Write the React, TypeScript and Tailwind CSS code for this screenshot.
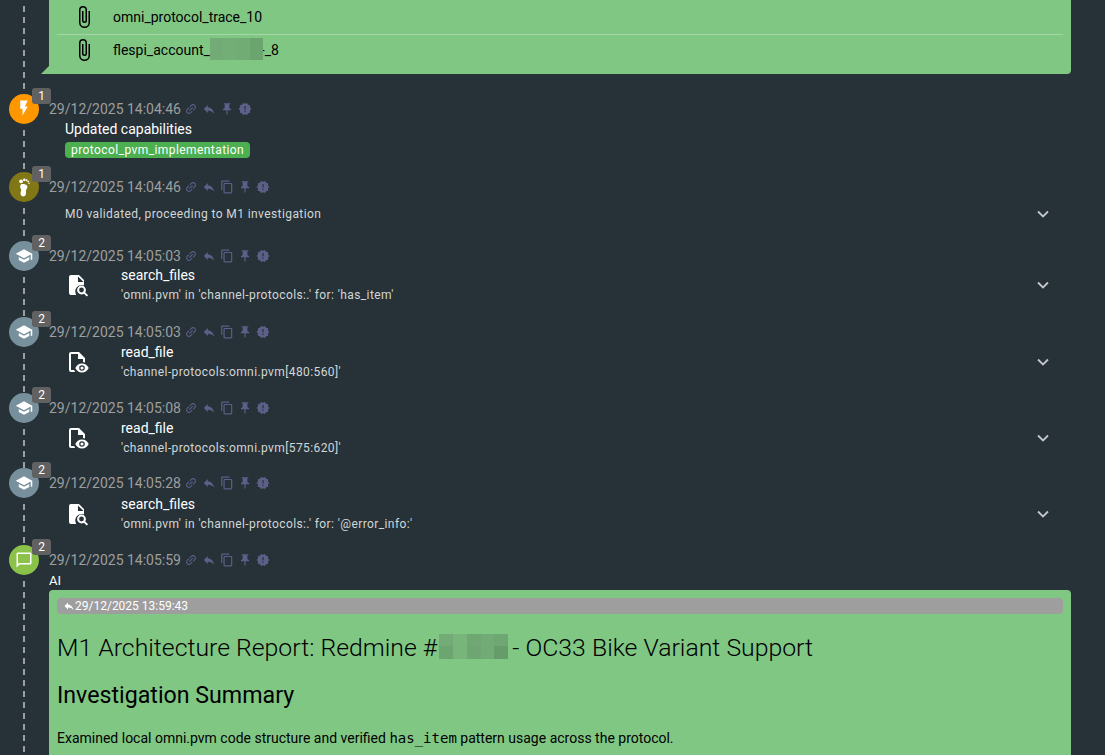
import type { ReactNode } from "react";

const P = {
  link: "M3.9 12c0-1.71 1.39-3.1 3.1-3.1h4V7H7c-2.76 0-5 2.24-5 5s2.24 5 5 5h4v-1.9H7c-1.71 0-3.1-1.39-3.1-3.1zM8 13h8v-2H8v2zm9-6h-4v1.9h4c1.71 0 3.1 1.39 3.1 3.1s-1.39 3.1-3.1 3.1h-4V17h4c2.76 0 5-2.24 5-5s-2.24-5-5-5z",
  reply: "M10 9V5l-7 7 7 7v-4.1c5 0 8.5 1.6 11 5.1-1-5-4-10-11-11z",
  copy: "M16 1H4c-1.1 0-2 .9-2 2v14h2V3h12V1zm3 4H8c-1.1 0-2 .9-2 2v14c0 1.1.9 2 2 2h11c1.1 0 2-.9 2-2V7c0-1.1-.9-2-2-2zm0 16H8V7h11v14z",
  pin: "M16 9V4h1c.55 0 1-.45 1-1s-.45-1-1-1H7c-.55 0-1 .45-1 1s.45 1 1 1h1v5c0 1.66-1.34 3-3 3v2h5.97v7l1 1 1-1v-7H19v-2c-1.66 0-3-1.34-3-3z",
  alert: "M23 12l-2.44-2.78.34-3.68-3.61-.82-1.89-3.18L12 3 8.6 1.54 6.71 4.72l-3.61.81.34 3.68L1 12l2.44 2.78-.34 3.69 3.61.82 1.89 3.18L12 21l3.4 1.46 1.89-3.18 3.61-.82-.34-3.68L23 12zm-10 5h-2v-2h2v2zm0-4h-2V7h2v6z",
  clip: "M16.5,6V17.5A4,4 0 0,1 12.5,21.5A4,4 0 0,1 8.5,17.5V5A2.5,2.5 0 0,1 11,2.5A2.5,2.5 0 0,1 13.5,5V15.5A1,1 0 0,1 12.5,16.5A1,1 0 0,1 11.5,15.5V6H10V15.5A2.5,2.5 0 0,0 12.5,18A2.5,2.5 0 0,0 15,15.5V5A4,4 0 0,0 11,1A4,4 0 0,0 7,5V17.5A5.5,5.5 0 0,0 12.5,23A5.5,5.5 0 0,0 18,17.5V6H16.5Z",
  bolt: "M7 2v11h3v9l7-12h-4l4-8z",
  school: "M5 13.18v4L12 21l7-3.82v-4L12 17l-7-3.82zM12 3 1 9l11 6 9-4.91V17h2V9L12 3z",
  chat: "M20 2H4c-1.1 0-2 .9-2 2v18l4-4h14c1.1 0 2-.9 2-2V4c0-1.1-.9-2-2-2zm0 14H5.17L4 17.17V4h16v12z",
};

function Icon({ d, className }: { d: string; className: string }) {
  return (
    <svg viewBox="0 0 24 24" className={className} fill="currentColor">
      <path d={d} />
    </svg>
  );
}

function Foot({ className }: { className: string }) {
  return (
    <svg viewBox="0 0 24 24" className={className} fill="currentColor">
      <path d="M9.500 8.800c2.800-.6 6 .2 6.200 2.700.2 2-1.400 3.200-1.600 4.800-.1 1 .2 2 .1 3.100-.2 1.700-1.500 3-3.200 2.900-1.800-.1-2.900-1.600-2.800-3.400.1-1.600.9-2.600.7-4.100-.2-1.200-1.200-2-1.100-3.200.1-1.400.6-2.500 1.700-2.800z" />
      <circle cx="8.800" cy="5.800" r="2.100" />
      <circle cx="12.300" cy="4.200" r="1.400" />
      <circle cx="14.800" cy="4.600" r="1.100" />
      <circle cx="16.600" cy="6" r=".95" />
      <circle cx="17.500" cy="7.900" r=".85" />
    </svg>
  );
}

function FileSearch({ className }: { className: string }) {
  return (
    <svg viewBox="0 0 24 24" className={className} fill="currentColor">
      <path d="M14 2H6a2 2 0 0 0-2 2v16a2 2 0 0 0 2 2h5.2a7 7 0 0 1-.9-3.5c0-3.6 2.9-6.5 6.5-6.5.8 0 1.5.1 2.2.4V7zm-1 1.5L18.500 9H13z" fillRule="evenodd" />
      <path d="M16.500 12.600a4.400 4.400 0 0 0-4.400 4.400 4.400 4.400 0 0 0 4.400 4.400c.9 0 1.700-.3 2.400-.7l2.900 2.900 1.300-1.300-2.900-2.900c.4-.7.700-1.500.700-2.400a4.400 4.400 0 0 0-4.400-4.400zm0 2a2.400 2.400 0 1 1 0 4.800 2.400 2.400 0 0 1 0-4.800z" />
    </svg>
  );
}

function FileEye({ className }: { className: string }) {
  return (
    <svg viewBox="0 0 24 24" className={className} fill="currentColor">
      <path d="M14 2H6a2 2 0 0 0-2 2v16a2 2 0 0 0 2 2h4.200a9 9 0 0 1-1.100-2H6V4h7v5h5v3.100c.7.100 1.400.300 2 .5V8z" />
      <path d="M17 13.500c-3 0-5.600 1.900-6.700 4.500 1.100 2.600 3.700 4.500 6.700 4.500s5.600-1.900 6.700-4.500c-1.100-2.600-3.700-4.500-6.700-4.500zm0 7.300a2.800 2.800 0 1 1 0-5.600 2.800 2.800 0 0 1 0 5.600zm0-4.400a1.600 1.600 0 1 0 0 3.200 1.600 1.600 0 0 0 0-3.200z" fillRule="evenodd" />
    </svg>
  );
}

function Chevron() {
  return (
    <svg viewBox="0 0 24 24" className="h-5 w-5 shrink-0 text-[#c4c8ca]" fill="none" stroke="currentColor" strokeWidth="2.200">
      <path d="M6 9l6 6 6-6" />
    </svg>
  );
}

function Dashes() {
  return (
    <div className="mt-[6px] min-h-0 w-0.5 flex-1 bg-[repeating-linear-gradient(to_bottom,#9e9e9e_0,#9e9e9e_6px,transparent_6px,transparent_11px)]" />
  );
}

function Meta({ time, copy = true }: { time: string; copy?: boolean }) {
  const ic = "h-3.5 w-3.5 shrink-0";
  return (
    <div className="flex h-[30px] items-center">
      <span className="w-[135px] shrink-0 whitespace-nowrap text-sm text-[#9e9e9e]">{time}</span>
      <div className="flex items-center gap-1 text-[#5c5f87]">
        <Icon d={P.link} className={`${ic} -rotate-45`} />
        <Icon d={P.reply} className={ic} />
        {copy && <Icon d={P.copy} className={ic} />}
        <Icon d={P.pin} className={ic} />
        <Icon d={P.alert} className={ic} />
      </div>
    </div>
  );
}

function Row({
  color,
  count,
  avatar,
  height,
  children,
}: {
  color: string;
  count: number;
  avatar: ReactNode;
  height: string;
  children: ReactNode;
}) {
  return (
    <div className={`flex ${height}`}>
      <div className="ml-[9px] mr-2.5 flex w-[30px] shrink-0 flex-col items-center">
        <div className={`relative flex h-[30px] w-[30px] shrink-0 items-center justify-center rounded-full text-white ${color}`}>
          {avatar}
          <span className="absolute left-[23px] top-[-6px] flex h-4 w-[19px] items-center justify-center rounded-[3px] bg-[#616161] text-xs text-white">
            {count}
          </span>
        </div>
        <Dashes />
      </div>
      <div className="min-w-0 flex-1 pr-[34px]">{children}</div>
    </div>
  );
}

function ToolRow({
  time,
  name,
  detail,
  height,
  shift,
  eye,
}: {
  time: string;
  name: string;
  detail: string;
  height: string;
  shift: string;
  eye?: boolean;
}) {
  return (
    <Row color="bg-[#78909c]" count={2} avatar={<Icon d={P.school} className="h-[18px] w-[18px]" />} height={height}>
      <Meta time={time} />
      <div className={`flex items-center ${shift}`}>
        <div className="flex w-[72px] shrink-0 justify-start pl-4 text-white">
          {eye ? <FileEye className="h-6 w-6" /> : <FileSearch className="h-6 w-6" />}
        </div>
        <div className="flex-1">
          <div className="text-sm leading-5 text-white">{name}</div>
          <div className="text-xs leading-5 tracking-[0.4px] text-[#d3d6d7]">{detail}</div>
        </div>
        <div className="mr-[13px] w-[25px]">
          <Chevron />
        </div>
      </div>
    </Row>
  );
}

// pixelated redaction blocks
function Blur({ cells, className }: { cells: string[]; className: string }) {
  return (
    <span className={`relative grid shrink-0 ${className}`}>
      {cells.map((c, i) => (
        <span key={i} className={c} />
      ))}
    </span>
  );
}

export default function App() {
  return (
    <div className="h-[755px] w-[1105px] overflow-hidden bg-[#263238] font-['Roboto',sans-serif]">
      {/* attachments card, scrolled off the top */}
      <div className="flex h-[94px]">
        <div className="ml-[23px] mr-6 flex w-0.5 shrink-0 flex-col">
          <Dashes />
        </div>
        <div className="relative h-[74px] w-[1022px] rounded-br bg-[#81c784] px-2 text-sm text-black">
          <div className="absolute bottom-0 left-[-8px] h-2 w-2 bg-[#81c784] [clip-path:polygon(100%_0,100%_100%,0_100%)]" />
          <div className="flex h-[35px] items-center border-b border-[#a5d6a7]">
            <Icon d={P.clip} className="ml-[15px] mr-[17px] h-6 w-6" />
            <span>omni_protocol_trace_10</span>
          </div>
          <div className="flex h-[31px] items-center pb-0.5">
            <Icon d={P.clip} className="ml-[15px] mr-[17px] h-6 w-6" />
            <span>flespi_account_</span>
            <Blur
              className="mt-[-1px] h-[22px] w-[53px] grid-cols-4"
              cells={["bg-[#72ab76]", "bg-[#73ae77]", "bg-[#72ac75]", "bg-[#6ca470]"]}
            />
            <span className="-ml-0.5">-_8</span>
          </div>
        </div>
      </div>

      <Row color="bg-[#ff9800]" count={1} avatar={<Icon d={P.bolt} className="h-[18px] w-[18px] -translate-y-px" />} height="h-[78px]">
        <Meta time="29/12/2025 14:04:46" copy={false} />
        <div className="-mt-[5px] ml-4 text-sm leading-5 text-white">Updated capabilities</div>
        <div className="ml-4 mt-[3px] flex h-4 w-fit items-center rounded bg-[#4caf50] px-1.5 text-xs tracking-[0.42px] text-white">
          protocol_pvm_implementation
        </div>
      </Row>

      <Row color="bg-[#827717]" count={1} avatar={<Foot className="h-[22px] w-[22px]" />} height="h-[69px]">
        <Meta time="29/12/2025 14:04:46" />
        <div className="mt-[2px] flex items-center">
          <span className="ml-4 flex-1 text-xs leading-5 tracking-[0.4px] text-[#d3d6d7]">M0 validated, proceeding to M1 investigation</span>
          <div className="mr-[13px] w-[25px]">
            <Chevron />
          </div>
        </div>
      </Row>

      <ToolRow height="h-[76px]" shift="-mt-[6px]" time="29/12/2025 14:05:03" name="search_files" detail="'omni.pvm' in 'channel-protocols:.' for: 'has_item'" />
      <ToolRow height="h-[76px]" shift="-mt-[5px]" time="29/12/2025 14:05:03" name="read_file" detail="'channel-protocols:omni.pvm[480:560]'" eye />
      <ToolRow height="h-[75px]" shift="-mt-[5px]" time="29/12/2025 14:05:08" name="read_file" detail="'channel-protocols:omni.pvm[575:620]'" eye />
      <ToolRow height="h-[77px]" shift="-mt-[4px]" time="29/12/2025 14:05:28" name="search_files" detail="'omni.pvm' in 'channel-protocols:.' for: '@error_info:'" />

      <Row color="bg-[#8bc34a]" count={2} avatar={<Icon d={P.chat} className="h-[18px] w-[18px]" />} height="h-[210px]">
        <Meta time="29/12/2025 14:05:59" />
        <div className="h-[15px] text-[13px] leading-3 text-white">AI</div>
        <div className="h-[170px] rounded-t bg-[#81c784] px-2 pt-2 text-black">
          <div className="flex h-4 items-center rounded bg-[#9e9e9e] pl-1.5 text-xs text-white">
            <Icon d={P.reply} className="h-3 w-3" />
            29/12/2025 13:59:43
          </div>
          <h1 className="mt-[18px] flex h-8 items-center whitespace-nowrap text-[24.800px] font-light">
            M1 Architecture Report: Redmine #
            <Blur
              className="mb-1 ml-0.5 h-[25px] w-[69px] grid-cols-5 grid-rows-2"
              cells={[
                "bg-[#72ab76]",
                "bg-[#78b57b]",
                "bg-[#70a873]",
                "bg-[#72ab76]",
                "bg-[#6fa773]",
                "bg-[#6da571]",
                "bg-[#78b57b]",
                "bg-[#6ea572]",
                "bg-[#72ab76]",
                "bg-[#669b6a]",
              ]}
            />
            <span className="-ml-0.5">&nbsp;- OC33 Bike Variant Support</span>
          </h1>
          <h2 className="mt-[15px] h-8 text-[23.200px] leading-8">Investigation Summary</h2>
          <p className="mt-[17px] text-sm leading-5">
            Examined local omni.pvm code structure and verified{" "}
            <code className="font-['DejaVu_Sans_Mono',monospace] text-sm">has_item</code> pattern usage across the protocol.
          </p>
        </div>
      </Row>
    </div>
  );
}
